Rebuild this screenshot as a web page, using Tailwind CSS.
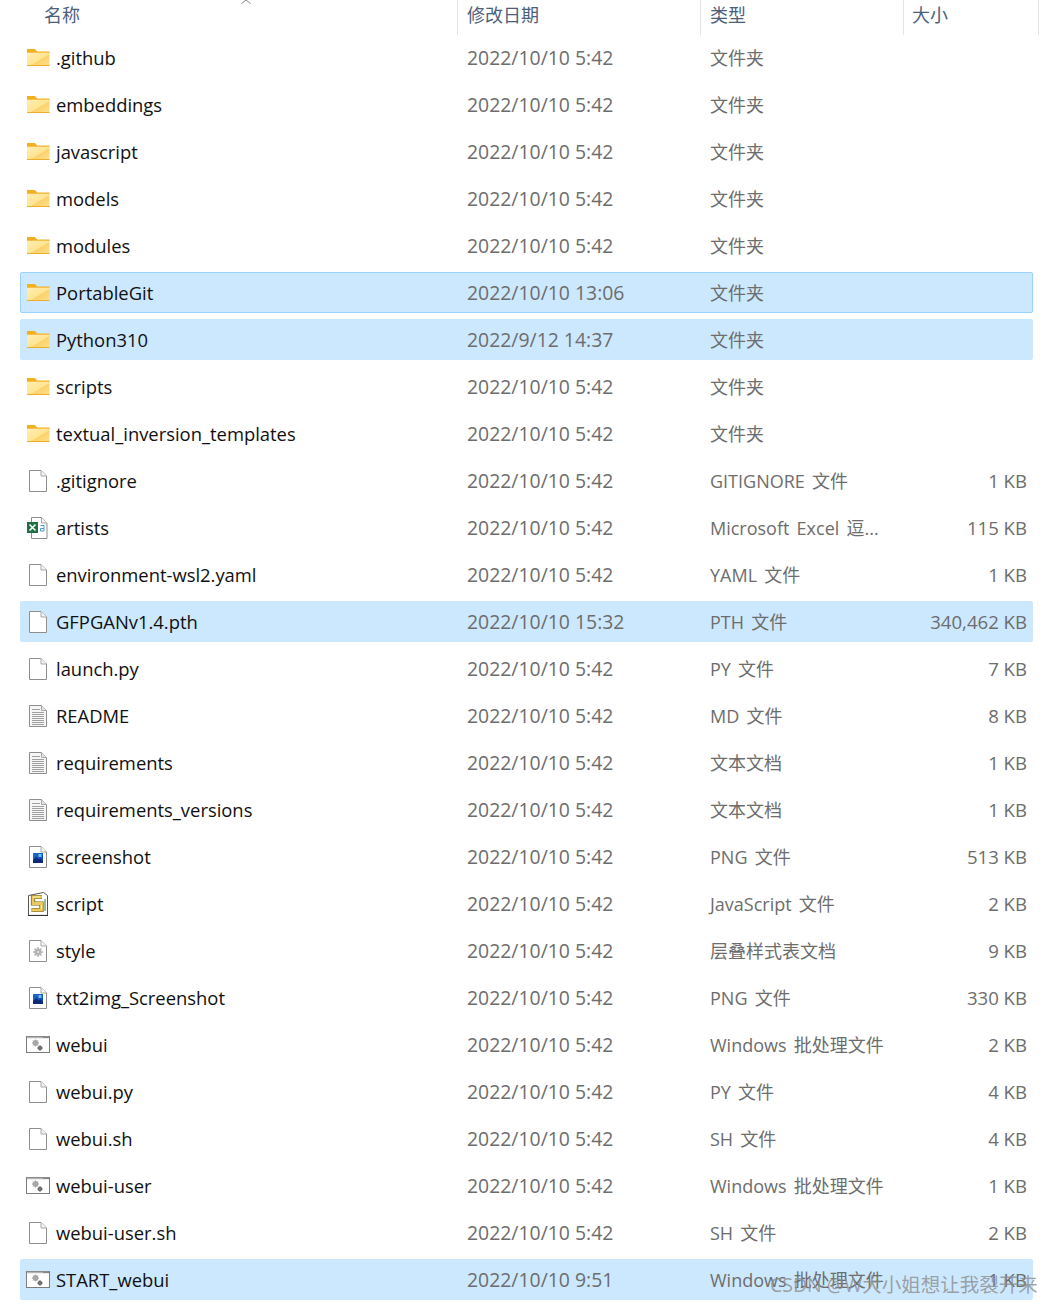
<!DOCTYPE html>
<html lang="zh-CN">
<head>
    <meta charset="UTF-8">
    <title>文件列表</title>
    <script src="https://cdn.jsdelivr.net/npm/@tailwindcss/browser@4"></script>
</head>
<body class="bg-white overflow-hidden font-['Open_Sans','Noto_Sans_CJK_SC',sans-serif]">

    <!-- Shared file icons -->
    <svg class="absolute w-0 h-0">
        <defs>
            <linearGradient id="folderFill" x1="0" y1="0" x2="1" y2="1">
                <stop offset="0" stop-color="#ffefb5"/>
                <stop offset="0.55" stop-color="#ffe491"/>
                <stop offset="0.56" stop-color="#fbd26c"/>
                <stop offset="1" stop-color="#ffe08c"/>
            </linearGradient>
            <linearGradient id="photoFill" x1="0" y1="0" x2="1" y2="1">
                <stop offset="0" stop-color="#1f6fd0"/>
                <stop offset="1" stop-color="#0f3fa8"/>
            </linearGradient>
        </defs>
        <symbol id="folder" viewBox="0 0 24 24">
            <path d="M1 3h8l2 2.500h12.500V7H1z" fill="#f3b01e"/>
            <path d="M1 6.500h22.500V20H1z" fill="url(#folderFill)"/>
            <path d="M1 19.500h22.500" stroke="#eeae2c" stroke-width="1"/>
            <path d="M1 6.500h22.500" stroke="#f6c04a" stroke-width="1"/>
        </symbol>
        <symbol id="file" viewBox="0 0 24 24">
            <path d="M3.500 1.500h11.500l5.500 5.500v15.500h-17z" fill="#fff" stroke="#8e8e8e"/>
            <path d="M15 1.500v5.500h5.500" fill="#f4f4f4" stroke="#a8a8a8"/>
        </symbol>
        <symbol id="excel" viewBox="0 0 24 24">
            <path d="M5.500 1.500h10l5.500 5.500v15.500h-15.500z" fill="#fff" stroke="#8e8e8e"/>
            <path d="M15.500 1.500v5.500h5.500" fill="#f4f4f4" stroke="#a8a8a8"/>
            <rect x="1" y="6" width="11" height="11" fill="#1f6e43"/>
            <path d="M3.500 8.500l6 6M9.500 8.500l-6 6" stroke="#fff" stroke-width="1.600"/>
            <path d="M14.500 9.500h3.500v5.500h-3.500v-2.500h3.500" fill="none" stroke="#4f9cc4" stroke-width="1"/>
        </symbol>
        <symbol id="text" viewBox="0 0 24 24">
            <path d="M3.500 1.500h12l5 5v16h-17z" fill="#f6f6f6" stroke="#8e8e8e"/>
            <path d="M15.500 1.500v5h5" fill="#e6e6e6" stroke="#a8a8a8"/>
            <path d="M6 5.500h8M6 8.500h12M6 10.500h12M6 12.500h12M6 14.500h12M6 16.500h12M6 18.500h12M6 20.500h12" stroke="#a0a0a0" stroke-width="1"/>
        </symbol>
        <symbol id="image" viewBox="0 0 24 24">
            <path d="M3.500 1.500h11.500l5.500 5.500v15.500h-17z" fill="#fff" stroke="#8e8e8e"/>
            <path d="M15 1.500v5.500h5.500" fill="#f4f4f4" stroke="#a8a8a8"/>
            <rect x="7" y="8" width="10" height="10" fill="url(#photoFill)"/>
            <path d="M7 15.500l3-3.500 3 2.500 1.500-1 2.500 2.500v2H7z" fill="#0b2a7a"/>
            <rect x="12.500" y="9" width="3" height="3" fill="#6ec0f2"/>
        </symbol>
        <symbol id="script" viewBox="0 0 24 24">
            <path d="M2.500 3.500l15-3 4 3v20h-19z" fill="#fff" stroke="#555"/>
            <path d="M2 23.500h20" stroke="#333" stroke-width="1.200"/>
            <path d="M16 5H7v6.500h8.500V18H5.500" fill="none" stroke="#6e5a20" stroke-width="4.200"/>
            <path d="M16 5H7v6.500h8.500V18H5.500" fill="none" stroke="#ecc95a" stroke-width="2.800"/>
            <path d="M7 5h7M15.500 13v4" stroke="#fff3b8" stroke-width="0.900"/>
            <path d="M19 7v12" stroke="#6fa46f" stroke-width="1.400"/>
        </symbol>
        <symbol id="style" viewBox="0 0 24 24">
            <path d="M3.500 1.500h11.500l5.500 5.500v15.500h-17z" fill="#fff" stroke="#8e8e8e"/>
            <path d="M15 1.500v5.500h5.500" fill="#f4f4f4" stroke="#a8a8a8"/>
            <circle cx="12" cy="13" r="3.500" fill="#b4b4b4"/>
            <path d="M12 8v10M7 13h10M8.500 9.500l7 7M15.500 9.500l-7 7" stroke="#b4b4b4" stroke-width="1.500"/>
            <circle cx="12" cy="13" r="1" fill="#e6e6e6"/>
        </symbol>
        <symbol id="batch" viewBox="0 0 24 24">
            <rect x="0.500" y="3.500" width="23" height="16" fill="#fff" stroke="#7d7d7d"/>
            <path d="M1 4.500h22" stroke="#b5b5b5" stroke-width="1.500"/>
            <path d="M17.500 4.500h1M19.500 4.500h1M21.500 4.500h1" stroke="#555" stroke-width="1"/>
            <circle cx="9.500" cy="10" r="2" fill="none" stroke="#a5a5a5" stroke-width="1.800"/>
            <path d="M9.500 6.500v7M6 10h7M7 7.500l5 5M12 7.500l-5 5" stroke="#a5a5a5" stroke-width="1"/>
            <circle cx="14" cy="15" r="1.500" fill="none" stroke="#6b6b6b" stroke-width="1.500"/>
            <path d="M14 12.200v5.600M11.200 15h5.600" stroke="#6b6b6b" stroke-width="1"/>
        </symbol>
    </svg>

    <div class="relative w-[1053px] h-[1305px]">
        <!-- Column headers -->
        <div class="relative flex h-[35px] text-[18px] text-[#4c607a]">
            <div class="w-[458px] pl-[44px] pt-[2px] border-r border-[#e5e5e5]">名称</div>
            <div class="w-[243px] pl-[9px] pt-[2px] border-r border-[#e5e5e5]">修改日期</div>
            <div class="w-[203px] pl-[9px] pt-[2px] border-r border-[#e5e5e5]">类型</div>
            <div class="w-[135px] pl-[8px] pt-[2px] border-r border-[#e5e5e5]">大小</div>
            <svg class="absolute left-[240px] top-0" width="12" height="4" viewBox="0 0 12 4">
                <path d="M1.500 3.500L6 0M10.500 3.500L6 0" fill="none" stroke="#8a8a8a" stroke-width="1"/>
            </svg>
        </div>

        <!-- File rows -->
        <div id="rows" class="flex flex-col gap-[6px] ml-[20px] w-[1013px] pt-[2px]"></div>

        <!-- Watermark -->
        <div class="absolute left-[770px] top-[1271px] text-[19.5px] leading-[28px] whitespace-nowrap text-[#8c8c8c]/80">CSDN @W大小姐想让我裂开来</div>
    </div>

    <script>
        const d = "2022/10/10 5:42";
        const files = [
            ["folder", ".github", d, "文件夹", ""],
            ["folder", "embeddings", d, "文件夹", ""],
            ["folder", "javascript", d, "文件夹", ""],
            ["folder", "models", d, "文件夹", ""],
            ["folder", "modules", d, "文件夹", ""],
            ["folder", "PortableGit", "2022/10/10 13:06", "文件夹", "", "focus"],
            ["folder", "Python310", "2022/9/12 14:37", "文件夹", "", "on"],
            ["folder", "scripts", d, "文件夹", ""],
            ["folder", "textual_inversion_templates", d, "文件夹", ""],
            ["file", ".gitignore", d, "GITIGNORE 文件", "1 KB"],
            ["excel", "artists", d, "Microsoft Excel 逗...", "115 KB"],
            ["file", "environment-wsl2.yaml", d, "YAML 文件", "1 KB"],
            ["file", "GFPGANv1.4.pth", "2022/10/10 15:32", "PTH 文件", "340,462 KB", "on"],
            ["file", "launch.py", d, "PY 文件", "7 KB"],
            ["text", "README", d, "MD 文件", "8 KB"],
            ["text", "requirements", d, "文本文档", "1 KB"],
            ["text", "requirements_versions", d, "文本文档", "1 KB"],
            ["image", "screenshot", d, "PNG 文件", "513 KB"],
            ["script", "script", d, "JavaScript 文件", "2 KB"],
            ["style", "style", d, "层叠样式表文档", "9 KB"],
            ["image", "txt2img_Screenshot", d, "PNG 文件", "330 KB"],
            ["batch", "webui", d, "Windows 批处理文件", "2 KB"],
            ["file", "webui.py", d, "PY 文件", "4 KB"],
            ["file", "webui.sh", d, "SH 文件", "4 KB"],
            ["batch", "webui-user", d, "Windows 批处理文件", "1 KB"],
            ["file", "webui-user.sh", d, "SH 文件", "2 KB"],
            ["batch", "START_webui", "2022/10/10 9:51", "Windows 批处理文件", "1 KB", "on"],
        ];

        const rowStyles = {
            focus: "bg-[#cce8ff] border border-[#99d1ff]",
            on: "bg-[#cce8ff] border border-[#cce8ff]",
            off: "border border-transparent",
        };

        document.getElementById("rows").innerHTML = files.map(([icon, name, date, type, size, state]) => `
            <div class="flex items-center h-[41px] rounded-[2px] whitespace-nowrap ${rowStyles[state || "off"]}">
                <svg class="ml-[5px] shrink-0" width="24" height="24"><use href="#${icon}"/></svg>
                <div class="w-[417px] pl-[6px] text-[18.4px] text-[#101010]">${name}</div>
                <div class="w-[243px] text-[19.4px] text-[#6d6d6d]">${date}</div>
                <div class="w-[200px] pt-[2px] text-[18px] [word-spacing:2.5px] text-[#6d6d6d]">${type}</div>
                <div class="flex-1 text-right pr-[5px] text-[18.6px] text-[#6d6d6d]">${size}</div>
            </div>`).join("");
    </script>
</body>
</html>
